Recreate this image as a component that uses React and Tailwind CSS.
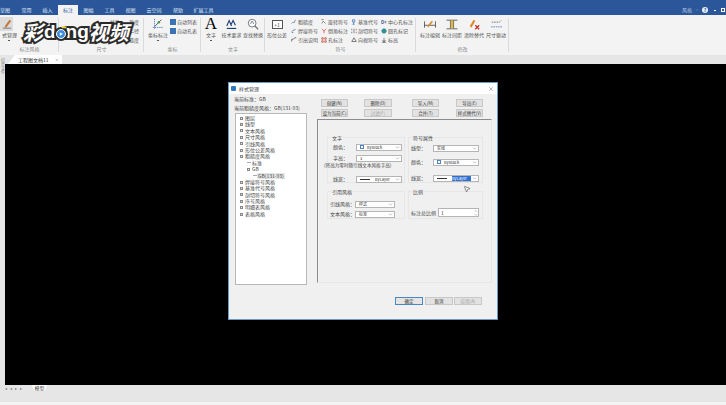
import React from "react";
import { ChevronDown, ChevronUp, MousePointer2, X, Minus, Plus } from "lucide-react";

const font = "font-['Noto_Sans_CJK_SC','Liberation_Sans',sans-serif]";

const tabs = [
  { label: "草图", width: "w-[16px] text-left" },
  { label: "常用", width: "w-[21px]" },
  { label: "插入", width: "w-[21px]" },
  { label: "标注", width: "w-[20px] bg-[#f3f3f3] text-[#2b579a]" },
  { label: "图幅", width: "w-[21px]" },
  { label: "工具", width: "w-[21px]" },
  { label: "视图", width: "w-[21px]" },
  { label: "云空间", width: "w-[26px]" },
  { label: "帮助", width: "w-[22px]" },
  { label: "扩展工具", width: "w-[29px]" },
];

const treeItems = [
  { label: "图层", box: "plus" },
  { label: "线型", box: "plus" },
  { label: "文本风格", box: "plus" },
  { label: "尺寸风格", box: "plus" },
  { label: "引线风格", box: "plus" },
  { label: "形位公差风格", box: "plus" },
  { label: "粗糙度风格", box: "minus" },
  { label: "标准", indent: "pl-[7px]", stem: true },
  { label: "GB", indent: "pl-[7px]", box: "minus" },
  { label: "GB(131-93)", indent: "pl-[13px]", stem: true, selected: true },
  { label: "焊接符号风格", box: "plus" },
  { label: "基准代号风格", box: "plus" },
  { label: "剖切符号风格", box: "plus" },
  { label: "序号风格", box: "plus" },
  { label: "明细表风格", box: "plus" },
  { label: "表格风格", box: "plus" },
];

const symbolColumns = [
  [
    { label: "粗糙度", path: "M1 6 L3 4 L4 5 L6 1", color: "#2b6cb0" },
    { label: "焊接符号", path: "M1 5 L3 3 L6 2 M1 6h2", color: "#1f4f8f" },
    { label: "引出说明", path: "M1 6 V3 H3 L5 1 H7", color: "#333" },
  ],
  [
    { label: "旋转符号", path: "M2 1 a1 1 0 1 1 0.1 0 M1 6 L3 3 L6 6", color: "#555" },
    { label: "倒角标注", path: "M1 1 L4 4 L7 1 M4 4 V7", color: "#c8322b" },
    { label: "孔标注", path: "M1 1h2v2h-2z M5 1h2v2h-2z M1 5h2v2h-2z M5 5h2v2h-2z", color: "#b8402f" },
  ],
  [
    { label: "基准代号", path: "M2 1h3v3h-3z M3.5 4 V7 M2 7h3", color: "#2b6cb0" },
    { label: "剖切符号", path: "M1 1v2 M1 5v2 M4 1v6 M7 1v2 M7 5v2", color: "#555" },
    { label: "向视符号", path: "M4 1 L1 6 H7 Z", color: "#444" },
  ],
  [
    { label: "中心孔标注", path: "M1 2h2l1 2-1 2H1z M5 3h2 M5 5h2", color: "#1f3f73" },
    { label: "圆孔标记", path: "M4 1 a3 3 0 1 0 0.1 0", color: "#2f8f9a", fill: true },
    { label: "标高", path: "M4 1v6 M1 7h6 M2 4 L4 7 L6 4", color: "#555" },
  ],
];

const SmallIcon = ({ path, color, fill }) => (
  <svg viewBox="0 0 8 8" className="w-[6px] h-[6px] shrink-0">
    <path d={path} stroke={color} strokeWidth="0.9" fill={fill ? color : "none"} />
  </svg>
);

const RibbonSmall = ({ path, color, fill, children }) => (
  <div className="flex items-center gap-px h-[9px] whitespace-nowrap">
    <SmallIcon path={path} color={color} fill={fill} />
    <span>{children}</span>
  </div>
);

const RibbonBig = ({ icon, label, width = "w-[22px]", dot }) => (
  <div className={`flex flex-col items-center shrink-0 ${width}`}>
    <div className="h-[14px] flex items-center justify-center">{icon}</div>
    <span className="whitespace-nowrap leading-[8px]">{label}</span>
    {dot && <span className="mt-[1px] w-[2px] h-[1px] bg-[#555]" />}
  </div>
);

const Group = ({ width, title, children }) => (
  <div className={`relative flex flex-col h-full shrink-0 ${width}`}>
    <div className="h-[29px] flex pt-[2px]">{children}</div>
    <div className="text-center text-[#8a8a8a] h-[10px] leading-[10px]">{title}</div>
    <span className="absolute right-0 top-[3px] bottom-[3px] w-px bg-[#dadada]" />
  </div>
);

const DialogButton = ({ children, disabled, active, className = "" }) => (
  <div
    className={`flex items-center justify-center border text-[4.5px] leading-none whitespace-nowrap ${
      active ? "border-[#4a86c5] bg-[#e4e4e4]" : "border-[#c8c8c8] bg-[#e2e2e2]"
    } ${disabled ? "text-[#a0a0a0] bg-[#d8d8d8]" : "text-[#333]"} ${className}`}
  >
    {children}
  </div>
);

const Select = ({ swatch, line, value, selected, width = "w-[46px]" }) => (
  <div className={`h-[7px] bg-white border border-[#b5b5b5] flex items-center pl-[3px] pr-px shrink-0 ${width}`}>
    {swatch && <span className="w-[4px] h-[4px] border-[0.5px] border-[#4a86c5] mr-[3px]" />}
    {line && <span className="w-[10px] h-px bg-[#333] mr-[5px]" />}
    <span
      className={`text-[4px] leading-[5px] whitespace-nowrap ${line ? "w-[19px]" : "flex-1"} ${
        selected ? "bg-[#2f6fd0] text-white" : "text-[#333]"
      }`}
    >
      {value}
    </span>
    <ChevronDown size={5} className="text-[#666] shrink-0 ml-auto" />
  </div>
);

const Field = ({ label, labelWidth, children, className = "" }) => (
  <div className={`flex items-center ${className}`}>
    <span className={`whitespace-nowrap shrink-0 ${labelWidth}`}>{label}</span>
    {children}
  </div>
);

const Fieldset = ({ title, className, titleLeft = "left-[3px]", children }) => (
  <div className={`relative border border-[#e6e6e6] ${className}`}>
    <span className={`absolute -top-[4px] bg-[#f0f0f0] px-px leading-[7px] whitespace-nowrap ${titleLeft}`}>{title}</span>
    {children}
  </div>
);

export default function App() {
  return (
    <div className={`relative w-[726px] h-[405px] overflow-hidden flex flex-col bg-black text-[5px] leading-[8px] text-[#444] ${font}`}>
      {/* title bar and tabs */}
      <div className="h-[15px] bg-[#2b579a] flex items-end justify-between text-[#dfe7f3] shrink-0">
        <div className="flex items-end h-[10px]">
          {tabs.map((t) => (
            <div key={t.label} className={`h-[10px] leading-[10px] text-center ${t.width}`}>
              {t.label}
            </div>
          ))}
        </div>
        <div className="flex items-center h-[10px] pr-px text-[#b9c8df]">
          <span>风格</span>
          <ChevronDown size={4} className="ml-[3px]" />
          <span className="ml-[3px] w-[6px] h-[6px] rounded-full bg-[#e8edf4] text-[#2b579a] text-[5px] leading-[6px] text-center font-bold">?</span>
          <span className="ml-[6px] w-[2px] h-px bg-white" />
          <span className="ml-[5px] w-[4px] h-[4px] border border-white" />
        </div>
      </div>

      {/* ribbon */}
      <div className="h-[40px] bg-[#f3f3f3] flex shrink-0 text-[#555]">
        <Group width="w-[59px]" title="标注风格">
          <div className="flex flex-col w-[18px]">
            <div className="w-[13px] h-[14px] bg-[#dcdcdc] flex items-center justify-center">
              <svg viewBox="0 0 12 12" className="w-[10px] h-[10px]">
                <path d="M3 9 L9 1 L11 2.5 L5 10.5 Z" fill="#c9763d" />
                <path d="M1 11h10" stroke="#666" />
              </svg>
            </div>
            <span className="whitespace-nowrap pl-[2px] leading-[8px]">式管理</span>
            <span className="mt-px ml-[8px] w-[2px] h-px bg-[#555]" />
          </div>
        </Group>
        <Group width="w-[85px]" title="尺寸">
          <div className="flex-1 flex justify-end pr-[5px] leading-[9px] gap-[9px]">
            <div className="flex flex-col">
              <span>线性</span>
            </div>
            <div className="flex flex-col">
              <span>角度</span>
              <span>半径</span>
              <span>弧度</span>
            </div>
          </div>
        </Group>
        <Group width="w-[57px]" title="坐标">
          <div className="flex pl-[3px] gap-px">
            <RibbonBig
              label="坐标标注"
              dot
              icon={
                <svg viewBox="0 0 14 14" className="w-[12px] h-[12px]">
                  <path d="M3 1v12M1 11h12" stroke="#3b73b5" strokeDasharray="1.5 1" />
                  <path d="M3 10 L8 5 L11 2" stroke="#444" fill="none" />
                  <circle cx="8" cy="5" r="1.4" fill="#3b9a5a" />
                </svg>
              }
            />
            <div className="flex flex-col">
              <RibbonSmall path="M0 0h8v8h-8z" color="#3b73b5" fill>自动列表</RibbonSmall>
              <RibbonSmall path="M0 0h8v8h-8z" color="#3b73b5" fill>自动孔表</RibbonSmall>
            </div>
          </div>
        </Group>
        <Group width="w-[64px]" title="文字">
          <div className="flex">
            <RibbonBig
              label="文字"
              dot
              width="w-[20px]"
              icon={<span className="font-['Liberation_Serif',serif] text-[17px] leading-[14px] text-black">A</span>}
            />
            <RibbonBig
              label="技术要求"
              width="w-[21px]"
              icon={
                <svg viewBox="0 0 14 14" className="w-[11px] h-[11px]">
                  <path d="M1 9 L4 2 L7 9 M6 8 L9 2 L12 8" stroke="#1b3f74" strokeWidth="1.4" fill="none" />
                  <path d="M1 12h12" stroke="#1b3f74" strokeWidth="1.4" />
                </svg>
              }
            />
            <RibbonBig
              label="查找替换"
              icon={
                <svg viewBox="0 0 14 14" className="w-[12px] h-[12px]">
                  <circle cx="6" cy="6" r="4.5" stroke="#666" fill="#fff" />
                  <path d="M9 9 L13 13" stroke="#777" strokeWidth="1.6" />
                  <path d="M4 7 L6 3.5 L8 7" stroke="#2b579a" fill="none" strokeWidth="0.8" />
                </svg>
              }
            />
          </div>
        </Group>
        <Group width="w-[151px]" title="符号">
          <div className="flex pl-px">
            <RibbonBig
              label="形位公差"
              width="w-[22px]"
              icon={
                <div className="w-[11px] h-[9px] border border-[#555] bg-white flex items-center justify-center text-[5px] leading-none text-[#333]">
                  +1
                </div>
              }
            />
            <div className="flex ml-[3px]">
              {symbolColumns.map((col, i) => (
                <div key={i} className="flex flex-col w-[30px]">
                  {col.map((item) => (
                    <RibbonSmall key={item.label} path={item.path} color={item.color} fill={item.fill}>
                      {item.label}
                    </RibbonSmall>
                  ))}
                </div>
              ))}
            </div>
          </div>
        </Group>
        <Group width="w-[93px]" title="修改">
          <div className="flex pl-[3px]">
            <RibbonBig
              label="标注编辑"
              icon={
                <svg viewBox="0 0 16 14" className="w-[14px] h-[11px]">
                  <path d="M1 3v8M15 3v8M1 8h14" stroke="#444" />
                  <path d="M5 10 L11 3" stroke="#d88a24" strokeWidth="2" />
                </svg>
              }
            />
            <RibbonBig
              label="标注间距"
              icon={
                <svg viewBox="0 0 16 14" className="w-[14px] h-[11px]">
                  <path d="M1 1.5h14M1 12.5h14" stroke="#444" />
                  <path d="M6 2v10M10 2v10" stroke="#444" />
                  <rect x="6.5" y="2" width="3" height="10" fill="#e2b93c" />
                </svg>
              }
            />
            <RibbonBig
              label="清除替代"
              icon={
                <svg viewBox="0 0 14 14" className="w-[11px] h-[11px]">
                  <path d="M1 9 L6 1 L8 2.5 L3 11 Z" fill="#d88a24" />
                  <path d="M8 8 L13 13 M13 8 L8 13" stroke="#c8302a" strokeWidth="1.6" />
                </svg>
              }
            />
            <RibbonBig
              label="尺寸驱动"
              icon={
                <svg viewBox="0 0 16 14" className="w-[13px] h-[11px]">
                  <path d="M2 4h10l2-2" stroke="#555" fill="none" strokeDasharray="2 1" />
                  <path d="M1 10h14" stroke="#3b73b5" strokeDasharray="2 1" />
                </svg>
              }
            />
          </div>
        </Group>
      </div>

      {/* document area */}
      <div className="flex-1 flex min-h-0">
        <div className="w-[5px] bg-[#e6e6e6] shrink-0 pt-[3px] text-[#777] text-[4px] leading-[5px] [writing-mode:vertical-rl]">
          打开文件
        </div>
        <div className="flex-1 flex flex-col">
          <div className="h-[9px] bg-[#e6e6e6] flex shrink-0 pl-[3px]">
            <div className="w-[54px] h-[9px] bg-white flex items-center justify-between pl-[10px] pr-[3px] text-[#333] [clip-path:polygon(7px_0,100%_0,100%_100%,0_100%)]">
              <span className="whitespace-nowrap">工程图文档11</span>
              <X size={4} className="text-[#777]" />
            </div>
          </div>
          <div className="flex-1 bg-black" />
        </div>
      </div>

      {/* sheet tabs and status */}
      <div className="h-[17px] bg-[#e6e6e6] shrink-0 flex items-start text-[#777]">
        <div className="flex w-[32px] pl-[5px] gap-[3px] pt-[1px] text-[4px] leading-[5px]">
          <span>◂</span>
          <span>◂</span>
          <span>▸</span>
          <span>▸</span>
        </div>
        <div className="w-[15px] h-[6px] bg-white text-[#444] text-center leading-[6px] [clip-path:polygon(0_0,100%_0,85%_100%,15%_100%)]">模型</div>
      </div>
      <div className="h-[3px] bg-[#f3f3f3] shrink-0" />

      {/* watermark */}
      <div className="absolute left-[23px] top-[21px] flex items-center h-[22px] pointer-events-none select-none text-white font-bold text-[20px] leading-[22px] [-webkit-text-stroke:4px_#2a2a2a] [paint-order:stroke_fill]">
        <span className="italic font-['Noto_Sans_CJK_SC',sans-serif]">彩</span>
        <span className="ml-px font-['Liberation_Sans',sans-serif] text-[19px]">d</span>
        <span className="relative w-[10px] h-[10px] mt-[3px] rounded-full bg-[#3c8de0] border border-white ring-2 ring-[#2a2a2a] flex items-center justify-center shrink-0">
          <svg viewBox="0 0 10 10" className="w-[6px] h-[6px]">
            <path d="M3 2 L8 5 L3 8 Z" fill="#fff" />
          </svg>
          <svg viewBox="0 0 10 6" className="absolute -top-[5px] right-[-2px] w-[6px] h-[4px]">
            <path d="M1 5 L1 1 L3.5 3 L5 0.5 L6.5 3 L9 1 L9 5 Z" fill="#f0c93a" />
          </svg>
        </span>
        <span className="font-['Liberation_Sans',sans-serif] text-[19px]">ng</span>
        <span className="italic font-['Noto_Sans_CJK_SC',sans-serif]">视频</span>
      </div>

      {/* dialog */}
      <div className="absolute left-[228px] top-[82px] w-[270px] h-[238px] bg-[#f0f0f0] border border-[#6b9ac4] flex flex-col text-[#444]">
        <div className="h-[11px] bg-white flex items-center justify-between pl-[2px] pr-[3px] shrink-0">
          <div className="flex items-center gap-[3px]">
            <span className="w-[5px] h-[5px] bg-[#2f7bbf] rounded-[1px]" />
            <span>样式管理</span>
          </div>
          <X size={6} className="text-[#666]" />
        </div>
        <div className="flex-1 flex pl-[5px] min-h-0">
          {/* left */}
          <div className="w-[83px] shrink-0 flex flex-col">
            <div className="h-[8px] mt-px">当前标准：GB</div>
            <div className="h-[8px] mt-px whitespace-nowrap">当前粗糙度风格：GB(131-93)</div>
            <div className="mt-px ml-px h-[172px] w-[72px] bg-white border border-[#b8b8b8] pt-px pl-[4px]">
              {treeItems.map((item) => (
                <div key={item.label} className={`h-[6.4px] flex items-center whitespace-nowrap leading-[6.4px] ${item.indent || ""}`}>
                  {item.box && (
                    <span className="w-[3px] h-[3px] mr-[2px] border-[0.5px] border-[#888] flex items-center justify-center shrink-0 text-[#555]">
                      {item.box === "plus" ? <Plus size={3} /> : <Minus size={3} />}
                    </span>
                  )}
                  {item.stem && <span className="w-[4px] h-px mr-px bg-[#aaa] shrink-0" />}
                  <span className={item.selected ? "bg-[#e5e5e5] px-px -ml-px" : ""}>{item.label}</span>
                </div>
              ))}
            </div>
          </div>
          {/* right */}
          <div className="flex-1 flex flex-col min-w-0">
            <div className="grid grid-cols-[43px_48px_44px_28px] gap-y-[2px] pt-[5px] pl-[4px]">
              <DialogButton className="h-[8px] w-[27px]">创建(N)</DialogButton>
              <DialogButton className="h-[8px] w-[28px]">删除(D)</DialogButton>
              <DialogButton className="h-[8px] w-[27px]">导入(M)</DialogButton>
              <DialogButton className="h-[8px] w-[27px]">导出(E)</DialogButton>
              <DialogButton className="h-[8px] w-[27px]">设为当前(C)</DialogButton>
              <DialogButton className="h-[8px] w-[28px]" disabled>过滤(F)</DialogButton>
              <DialogButton className="h-[8px] w-[27px]">合并(T)</DialogButton>
              <DialogButton className="h-[8px] w-[27px]">样式替代(V)</DialogButton>
            </div>
            <div className="mt-[2px] w-[175px] h-[164px] border border-l-[#8c8c8c] border-t-[#8c8c8c] border-r-[#e6e6e6] border-b-[#e6e6e6] flex gap-[3px] pt-[17px] pl-[9px]">
              <div className="w-[78px] flex flex-col gap-[8px]">
                <Fieldset title="文字" className="h-[46px] pl-[5px] pt-[5px]">
                  <Field label="颜色：" labelWidth="w-[23px]"><Select swatch value="ByBlock" /></Field>
                  <Field label="字高：" labelWidth="w-[23px]" className="mt-[3px]"><Select value="3" /></Field>
                  <div className="whitespace-nowrap h-[7px] leading-[7px] -ml-[9px] bg-[#f0f0f0] text-[4.6px]">(将高为零时随引线文本风格字高)</div>
                  <Field label="线宽：" labelWidth="w-[23px]" className="mt-[6px]"><Select line value="ByLayer" /></Field>
                </Fieldset>
                <Fieldset title="引用风格" className="h-[28px] pl-[2px] pt-[8px]">
                  <Field label="引线风格：" labelWidth="w-[25px]"><Select value="样式" width="w-[40px]" /></Field>
                  <Field label="文本风格：" labelWidth="w-[25px]" className="mt-[2px]"><Select value="标准" width="w-[40px]" /></Field>
                </Fieldset>
              </div>
              <div className="w-[75px] flex flex-col gap-[8px]">
                <Fieldset title="符号属性" className="h-[46px] pl-[2px] pt-[6px]">
                  <Field label="线型：" labelWidth="w-[22px]"><Select value="实线" /></Field>
                  <Field label="颜色：" labelWidth="w-[22px]" className="mt-[6px]"><Select swatch value="ByBlock" /></Field>
                  <Field label="线宽：" labelWidth="w-[22px]" className="mt-[8px]"><Select line value="ByLayer" selected /></Field>
                </Fieldset>
                <Fieldset title="比例" className="h-[28px] pl-[2px] pt-[16px]">
                  <Field label="标注总比例" labelWidth="w-[27px]">
                    <div className="h-[9px] w-[41px] bg-white border border-[#b5b5b5] flex items-center justify-between pl-[2px]">
                      <span>1</span>
                      <span className="flex flex-col text-[#555]">
                        <ChevronUp size={4} />
                        <ChevronDown size={4} />
                      </span>
                    </div>
                  </Field>
                </Fieldset>
              </div>
            </div>
            <div className="mt-[14px] ml-[78px] flex">
              <DialogButton active className="h-[8px] w-[28px]">确定</DialogButton>
              <DialogButton className="h-[8px] w-[28px] ml-[2px]">取消</DialogButton>
              <DialogButton disabled className="h-[8px] w-[28px] ml-px">应用(A)</DialogButton>
            </div>
          </div>
        </div>
      </div>

      {/* cursor */}
      <MousePointer2 size={8} className="absolute left-[463px] top-[185px] text-[#555] fill-white" />
    </div>
  );
}
